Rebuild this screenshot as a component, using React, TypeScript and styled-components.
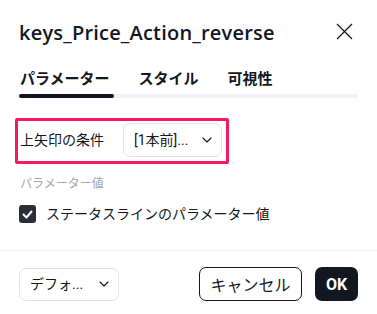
import React from 'react'
import styled, { createGlobalStyle } from 'styled-components'

const GlobalStyle = createGlobalStyle`
  html, body {
    margin: 0;
    padding: 0;
    background: #ffffff;
  }
  body {
    font-family: Roboto, "Noto Sans CJK JP", sans-serif;
    color: #131722;
  }
`

const ChevronDown = () => (
  <svg width="10" height="6" viewBox="0 0 10 6" fill="none">
    <path d="M1 1l4 4 4-4" stroke="#131722" strokeWidth="1.1" strokeLinecap="round" strokeLinejoin="round" />
  </svg>
)

const CloseIcon = () => (
  <svg width="17" height="17" viewBox="0 0 17 17" fill="none">
    <path d="M1 1l15 15M16 1L1 16" stroke="#131722" strokeWidth="1.3" />
  </svg>
)

const CheckIcon = () => (
  <svg width="11" height="9" viewBox="0 0 11 9" fill="none">
    <path d="M1.5 4.5l3 3 5-6" stroke="#ffffff" strokeWidth="2" strokeLinecap="round" strokeLinejoin="round" />
  </svg>
)

export default function App() {
  return (
    <>
      <GlobalStyle />
      <Dialog>
        <Header>
          <Title>keys_Price_Action_reverse</Title>
          <CloseButton aria-label="close">
            <CloseIcon />
          </CloseButton>
        </Header>

        <Tabs>
          <TabRow>
            <Tab $active>パラメーター</Tab>
            <Tab>スタイル</Tab>
            <Tab>可視性</Tab>
          </TabRow>
          <Track>
            <Indicator style={{ width: 95 }} />
          </Track>
        </Tabs>

        <Body>
          <HighlightRow>
            <FieldLabel>上矢印の条件</FieldLabel>
            <Select $width={99} $height={34}>
              <SelectValue>[1本前]...</SelectValue>
              <ChevronDown />
            </Select>
          </HighlightRow>

          <SectionTitle>パラメーター値</SectionTitle>

          <CheckRow>
            <CheckBox>
              <CheckIcon />
            </CheckBox>
            <CheckLabel>ステータスラインのパラメーター値</CheckLabel>
          </CheckRow>
        </Body>

        <Footer>
          <Select $width={100} $height={33}>
            <SelectValue>デフォ...</SelectValue>
            <ChevronDown />
          </Select>
          <Actions>
            <CancelButton>キャンセル</CancelButton>
            <OkButton>OK</OkButton>
          </Actions>
        </Footer>
      </Dialog>
    </>
  )
}

const Dialog = styled.div`
  width: 377px;
  height: 314px;
  display: flex;
  flex-direction: column;
  box-sizing: border-box;
  overflow: hidden;
`

const Header = styled.div`
  display: flex;
  align-items: center;
  justify-content: space-between;
  padding: 19px 24px 0 19px;
`

const Title = styled.h1`
  margin: 0;
  font-family: "Open Sans", "Noto Sans CJK JP", sans-serif;
  font-size: 20px;
  line-height: 28px;
  font-weight: 600;
  letter-spacing: 0.2px;
`

const CloseButton = styled.button`
  display: flex;
  align-items: center;
  justify-content: center;
  padding: 0;
  border: none;
  background: none;
  margin-top: -4px;
`

const Tabs = styled.div`
  display: flex;
  flex-direction: column;
  padding: 0 19px;
  margin-top: 22px;
`

const TabRow = styled.div`
  display: flex;
  gap: 29px;
  padding-left: 1px;
`

const Tab = styled.div<{ $active?: boolean }>`
  font-size: 15px;
  line-height: 20px;
  font-weight: 700;
  color: #131722;
`

const Track = styled.div`
  margin-top: 5px;
  height: 4px;
  border-radius: 2px;
  background: #f0f3fa;
  display: flex;
`

const Indicator = styled.div`
  height: 4px;
  border-radius: 2px;
  background: #131722;
`

const Body = styled.div`
  display: flex;
  flex-direction: column;
  align-items: flex-start;
  padding: 20px 19px 0 15px;
  flex: 1;
  border-bottom: 1px solid #eef0f3;
`

const HighlightRow = styled.div`
  display: flex;
  align-items: center;
  width: 214px;
  height: 46px;
  box-sizing: border-box;
  border: 3px solid #f7195f;
  border-radius: 2px;
  padding: 0 4px 2px 2px;
`

const FieldLabel = styled.span`
  width: 103px;
  font-size: 14px;
  line-height: 20px;
  color: #131722;
  white-space: nowrap;
`

const Select = styled.div<{ $width: number; $height: number }>`
  display: flex;
  align-items: center;
  justify-content: space-between;
  box-sizing: border-box;
  width: ${(p) => p.$width}px;
  height: ${(p) => p.$height}px;
  padding: 0 9px 0 10px;
  border: 1px solid #e0e3eb;
  border-radius: 7px;
  background: #ffffff;
`

const SelectValue = styled.span`
  font-size: 14px;
  line-height: 20px;
  color: #131722;
  white-space: nowrap;
`

const SectionTitle = styled.div`
  margin: 12px 0 0 5px;
  font-size: 12px;
  line-height: 16px;
  color: #a3a6af;
`

const CheckRow = styled.div`
  display: flex;
  align-items: center;
  gap: 10px;
  margin: 13px 0 0 4px;
`

const CheckBox = styled.span`
  display: flex;
  align-items: center;
  justify-content: center;
  width: 17px;
  height: 18px;
  border-radius: 3px;
  background: #2a2e39;
`

const CheckLabel = styled.span`
  font-size: 14px;
  line-height: 18px;
  color: #131722;
`

const Footer = styled.div`
  display: flex;
  align-items: center;
  justify-content: space-between;
  padding: 16px 19px 13px 19px;
`

const Actions = styled.div`
  display: flex;
  gap: 13px;
`

const CancelButton = styled.button`
  height: 34px;
  width: 103px;
  padding: 0;
  box-sizing: border-box;
  border: 1px solid #131722;
  border-radius: 7px;
  background: #ffffff;
  font-family: Roboto, "Noto Sans CJK JP", sans-serif;
  font-size: 16px;
  color: #131722;
`

const OkButton = styled.button`
  height: 34px;
  width: 43px;
  padding: 0;
  box-sizing: border-box;
  border: none;
  border-radius: 7px;
  background: #131722;
  font-family: Roboto, "Noto Sans CJK JP", sans-serif;
  font-size: 16px;
  font-weight: 700;
  color: #ffffff;
`
